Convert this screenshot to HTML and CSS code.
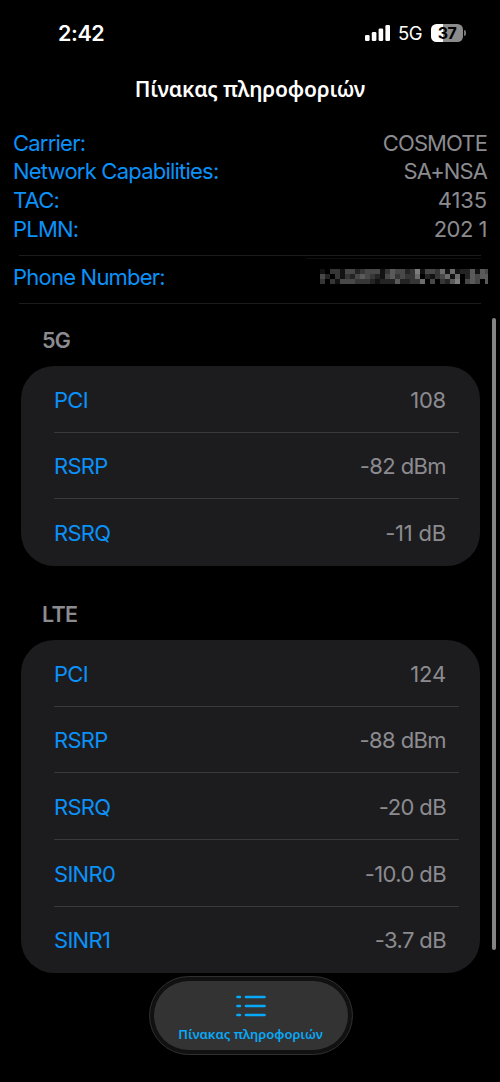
FILE: index.html
```html
<!DOCTYPE html>
<html lang="el">
<head>
<meta charset="utf-8">
<meta name="viewport" content="width=device-width, initial-scale=1">
<title>Πίνακας πληροφοριών</title>
<link rel="stylesheet" href="styles.css">
</head>
<body>
<div class="screen">
  <header class="status">
    <span class="time">2:42</span>
    <div class="indicators">
      <svg class="signal" width="26" height="16" viewBox="0 0 26 16" fill="#fff"><rect x="0" y="10" width="4.6" height="6" rx="1.3"/><rect x="6.8" y="7" width="4.6" height="9" rx="1.3"/><rect x="13.6" y="3.5" width="4.6" height="12.5" rx="1.3"/><rect x="20.4" y="0" width="4.6" height="16" rx="1.3"/></svg>
      <span class="network">5G</span>
      <div class="battery"><span class="level">37</span></div>
      <span class="cap"></span>
    </div>
  </header>
  <h1 class="title">Πίνακας πληροφοριών</h1>
  <section class="info">
    <div class="line"><span class="label">Carrier:</span><span class="value v-name">COSMOTE</span></div>
    <div class="line"><span class="label">Network Capabilities:</span><span class="value v-name">SA+NSA</span></div>
    <div class="line"><span class="label">TAC:</span><span class="value v-code">4135</span></div>
    <div class="line"><span class="label">PLMN:</span><span class="value">202 1</span></div>
  </section>
  <section class="phone">
    <span class="label">Phone Number:</span>
    <svg class="mosaic" id="mosaic" width="168" height="15" viewBox="0 0 168 15" shape-rendering="crispEdges"></svg>
  </section>
  <main class="groups">
    <section class="group">
      <h2>5G</h2>
      <div class="card">
        <div class="row"><span>PCI</span><span class="value v-digits">108</span></div>
        <div class="row"><span>RSRP</span><span class="value">-82 dBm</span></div>
        <div class="row"><span>RSRQ</span><span class="value v-digits">-11 dB</span></div>
      </div>
    </section>
    <section class="group">
      <h2>LTE</h2>
      <div class="card">
        <div class="row"><span>PCI</span><span class="value v-digits">124</span></div>
        <div class="row"><span>RSRP</span><span class="value">-88 dBm</span></div>
        <div class="row"><span>RSRQ</span><span class="value">-20 dB</span></div>
        <div class="row"><span>SINR0</span><span class="value">-10.0 dB</span></div>
        <div class="row"><span>SINR1</span><span class="value">-3.7 dB</span></div>
      </div>
    </section>
  </main>
  <nav class="tabbar">
    <div class="tab">
      <svg width="30" height="22" viewBox="0 0 30 22" fill="none" stroke="#08a9f8" stroke-width="2.7" stroke-linecap="round"><path d="M1.5 2h2.4M10 2h18.5M1.5 11h2.4M10 11h18.5M1.5 20h2.4M10 20h18.5"/></svg>
      <span>Πίνακας πληροφοριών</span>
    </div>
  </nav>
  <div class="scrollbar"></div>
</div>
<script src="mosaic.js"></script>
</body>
</html>
```
FILE: styles.css
```css
* { box-sizing: border-box; }
body { margin: 0; background: #000; font-family: Inter, "Liberation Sans", sans-serif; }
.screen { position: relative; width: 500px; height: 1082px; overflow: hidden; background: #000; display: flex; flex-direction: column; }
.status { height: 66px; flex: none; display: flex; justify-content: space-between; align-items: center; padding: 0 34px 0 58px; color: #fff; }
.time { font-size: 21.5px; font-weight: 600; letter-spacing: -0.4px; }
.indicators { display: flex; align-items: center; }
.signal { margin-right: 7px; }
.network { width: 33px; font-size: 18.5px; font-weight: 400; letter-spacing: -0.6px; }
.battery { width: 32px; height: 18px; border-radius: 5.5px; background: linear-gradient(90deg, #fff 12px, #8b8b8b 12px); display: flex; align-items: center; justify-content: center; }
.level { color: #000; font-size: 16px; line-height: 18px; font-weight: 700; letter-spacing: -0.5px; }
.cap { width: 2px; height: 6px; margin-left: 1px; background: #777; border-radius: 0 2px 2px 0; }
.title { margin: 0; height: 47px; flex: none; text-align: center; color: #fff; font-family: "Noto Sans", sans-serif; font-size: 21px; line-height: 46px; font-weight: 600; letter-spacing: -0.17px; white-space: nowrap; }
.info { height: 142px; flex: none; padding: 15.5px 13px 0; }
.line { display: flex; justify-content: space-between; height: 28.7px; line-height: 28.7px; font-size: 22px; }
.label { color: #0b91f8; white-space: nowrap; letter-spacing: -0.78px; }
.value { color: #8b8b90; white-space: nowrap; letter-spacing: -0.5px; }
.v-name { letter-spacing: -0.9px; }
.v-code { letter-spacing: -0.1px; }
.phone { position: relative; height: 49px; flex: none; display: flex; justify-content: space-between; align-items: center; margin: 0 19px; border: solid #1b1b1b; border-width: 1px 0; font-size: 22px; }
.phone::before { content: ""; position: absolute; top: 2px; left: 288px; right: 0; height: 1px; background: #101010; }
.phone .label { margin-left: -6px; padding-bottom: 5px; }
.mosaic { margin: 0 -7px 7px 0; }
.groups { padding: 12px 21px 0; }
.group { margin-bottom: 24px; }
h2 { margin: 0; height: 50px; padding-left: 21px; line-height: 48px; font-size: 21.5px; font-weight: 600; letter-spacing: -0.7px; color: #8b8b90; }
.card { width: 459px; padding: 0 33px; background: #1c1c1e; border-radius: 33px; }
.row { position: relative; height: 66.67px; display: flex; align-items: center; justify-content: space-between; padding: 1px 1px 0 0; font-size: 22px; color: #0b91f8; letter-spacing: -0.7px; }
.row + .row::before { content: ""; position: absolute; top: -1px; left: 0; right: -12px; height: 1px; background: #39393b; }
.row .value { letter-spacing: -0.6px; }
.row .v-digits { letter-spacing: -0.2px; }
.tabbar { position: absolute; left: 149px; top: 976px; width: 204px; height: 79px; padding: 4px; border: 1px solid #303030; border-radius: 40px; background: #111; }
.tab { height: 69px; border-radius: 35px; background: #333; display: flex; flex-direction: column; align-items: center; padding-top: 14px; color: #08a9f8; }
.tab svg { margin-right: 1px; }
.tab span { margin-top: 8px; margin-right: 1px; font-family: "Noto Sans", sans-serif; font-size: 13px; line-height: 18px; font-weight: 600; white-space: nowrap; }
.scrollbar { position: absolute; left: 492px; top: 318px; width: 4px; height: 632px; border-radius: 2px; background: #848484; }
```
FILE: mosaic.js
```js
// Obscured phone number: brightness of each 5px cell, one string per row.
const rows = [
  "1033144234441354423714436161225154",
  "4203132454321453433602134616025455",
  "3031444333212225223360403257045405"
];
const svg = document.getElementById("mosaic");
rows.forEach((row, y) => {
  for (let x = 0; x < 34; x++) {
    const v = Number(row[x]) * 18;
    const r = document.createElementNS("http://www.w3.org/2000/svg", "rect");
    r.setAttribute("x", x * 5);
    r.setAttribute("y", y * 5);
    r.setAttribute("width", 5);
    r.setAttribute("height", 5);
    r.setAttribute("fill", `rgb(${v},${v},${v})`);
    svg.appendChild(r);
  }
});
```
